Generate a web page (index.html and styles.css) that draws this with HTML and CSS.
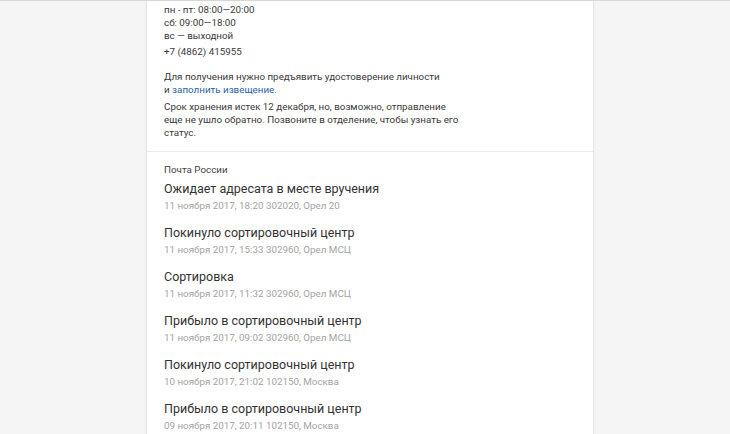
FILE: index.html
```html
<!DOCTYPE html>
<html lang="ru">
<head>
<meta charset="utf-8">
<link rel="stylesheet" href="styles.css">
</head>
<body>
<div class="page">
  <main class="column">
    <section class="office">
      <div class="hours">
        <div>пн - пт: 08:00—20:00</div>
        <div>сб: 09:00—18:00</div>
        <div>вс — выходной</div>
      </div>
      <div class="phone">+7 (4862) 415955</div>
      <p class="note">Для получения нужно предъявить удостоверение личности<br>и <a href="#" class="link">заполнить извещение</a>.</p>
      <p class="note second">Срок хранения истек 12 декабря, но, возможно, отправление<br>еще не ушло обратно. Позвоните в отделение, чтобы узнать его<br>статус.</p>
    </section>
    <section class="history">
      <div class="carrier">Почта России</div>
      <ul class="events">
        <li class="event"><div class="title">Ожидает адресата в месте вручения</div><div class="meta">11 ноября 2017, 18:20 302020, Орел 20</div></li>
        <li class="event"><div class="title">Покинуло сортировочный центр</div><div class="meta">11 ноября 2017, 15:33 302960, Орел МСЦ</div></li>
        <li class="event"><div class="title">Сортировка</div><div class="meta">11 ноября 2017, 11:32 302960, Орел МСЦ</div></li>
        <li class="event"><div class="title">Прибыло в сортировочный центр</div><div class="meta">11 ноября 2017, 09:02 302960, Орел МСЦ</div></li>
        <li class="event"><div class="title">Покинуло сортировочный центр</div><div class="meta">10 ноября 2017, 21:02 102150, Москва</div></li>
        <li class="event"><div class="title">Прибыло в сортировочный центр</div><div class="meta">09 ноября 2017, 20:11 102150, Москва</div></li>
      </ul>
    </section>
  </main>
</div>
</body>
</html>
```
FILE: styles.css
```css
html, body {
  margin: 0;
  padding: 0;
  height: 100%;
  overflow: hidden;
}
body {
  background: #f5f5f5;
  font-family: Roboto, "Noto Sans", sans-serif;
  color: #3a3a3a;
}
.page {
  border-top: 1px solid #d9d9d9;
  height: 100%;
  display: flex;
}
.column {
  margin-left: 146px;
  width: 446px;
  background: #fff;
  border-left: 1px solid #e6e6e6;
  border-right: 1px solid #e6e6e6;
  box-shadow: 0 0 3px rgba(0,0,0,0.04);
  min-height: 100%;
}
.office {
  padding: 2px 16px 12px 17px;
  font-size: 9.8px;
  line-height: 13px;
  border-bottom: 1px solid #ebebeb;
}
.phone {
  margin-top: 3px;
}
.note {
  margin: 12px 0 0;
}
.note.second {
  margin-top: 4px;
}
.link {
  color: #2b5ea3;
  text-decoration: none;
}
.history {
  padding: 11px 16px 0 17px;
}
.carrier {
  font-size: 9.8px;
  line-height: 13px;
  color: #444;
}
.events {
  list-style: none;
  margin: 4px 0 0;
  padding: 0;
}
.event {
  margin-bottom: 11px;
}
.title {
  font-size: 12.5px;
  line-height: 18px;
  color: #333;
}
.meta {
  margin-top: 1px;
  font-size: 9.8px;
  line-height: 14px;
  color: #a3a3a3;
}
```
